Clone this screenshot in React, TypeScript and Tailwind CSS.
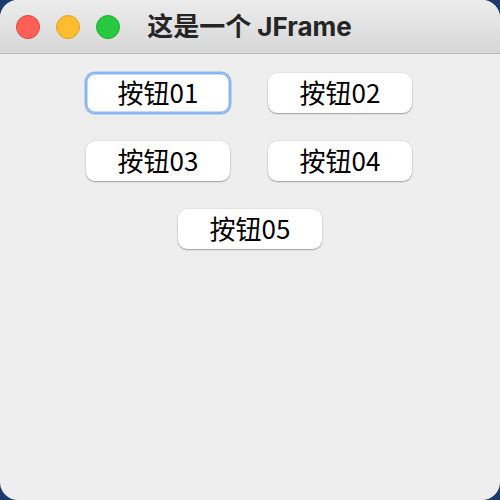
import React from "react";

const labels = [["按钮01", "按钮02"], ["按钮03", "按钮04"], ["按钮05"]];

function SwingButton({ text, focused }: { text: string; focused?: boolean }) {
  return (
    <button
      className={
        "flex h-[40px] w-[144px] items-center justify-center rounded-[9px] bg-white text-[26px] leading-none text-black " +
        (focused
          ? "shadow-[0_0_0_1.5px_#8ab6ef,inset_0_0_0_1.5px_#8ab6ef]"
          : "shadow-[0_1px_1.5px_rgba(0,0,0,0.3),0_0_0_0.5px_rgba(0,0,0,0.08)]")
      }
      style={{ fontFamily: '"Noto Sans CJK SC", "Noto Sans", sans-serif' }}
    >
      <span className="-mt-[2px]">{text}</span>
    </button>
  );
}

export default function App() {
  return (
    <div className="h-[500px] w-[500px] bg-[#1c3a6c]">
      <div className="flex h-full w-full flex-col overflow-hidden rounded-[18px] bg-[#eeeeee]">
        <div className="grid h-[54px] shrink-0 grid-cols-[1fr_auto_1fr] items-center border-b-[1.5px] border-[#b8b8b8] bg-gradient-to-b from-[#ececec] to-[#d7d7d7]">
          <div className="flex items-center gap-[16px] pl-[16px]">
            <span className="h-[24px] w-[24px] rounded-full border border-[#e1463f] bg-[#fe5f57]" />
            <span className="h-[24px] w-[24px] rounded-full border border-[#dea224] bg-[#febc2e]" />
            <span className="h-[24px] w-[24px] rounded-full border border-[#1dae2c] bg-[#28c840]" />
          </div>
          <div
            className="pr-[1px] text-[26px] font-bold leading-none text-[#252525]"
            style={{ fontFamily: 'Inter, "Noto Sans CJK SC", sans-serif' }}
          >
            这是一个 JFrame
          </div>
          <div />
        </div>
        <div className="flex flex-col items-center gap-[28px] pt-[19px]">
          {labels.map((row, i) => (
            <div key={i} className={"flex gap-[38px] " + (row.length > 1 ? "pr-[2px]" : "")}>
              {row.map((t, j) => (
                <SwingButton key={t} text={t} focused={i === 0 && j === 0} />
              ))}
            </div>
          ))}
        </div>
      </div>
    </div>
  );
}
